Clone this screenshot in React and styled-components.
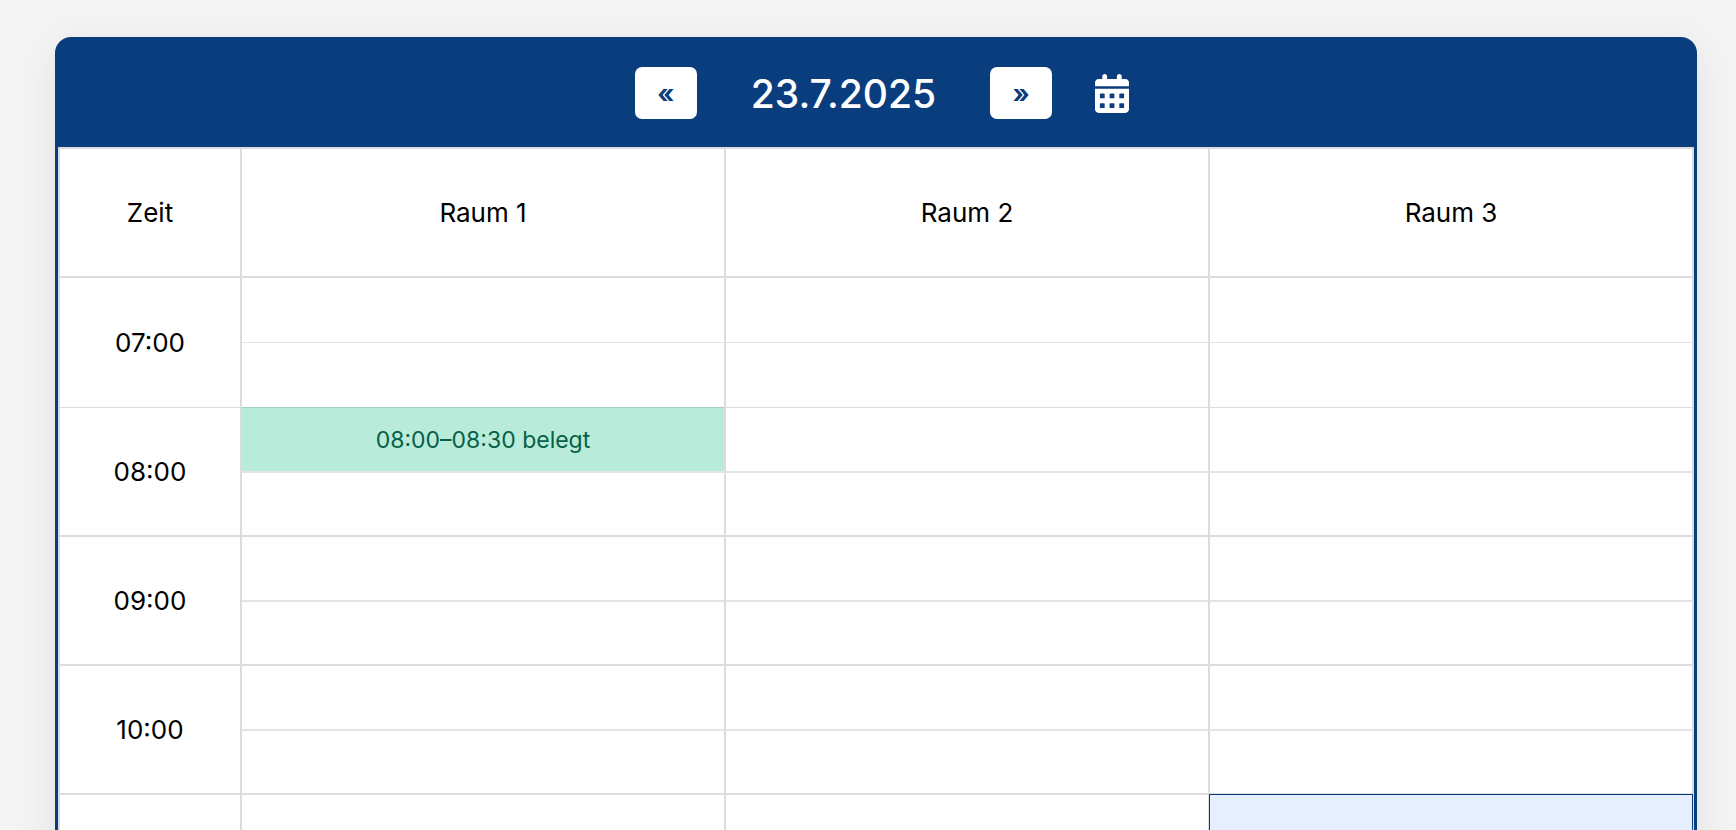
import React from "react";
import styled, { createGlobalStyle } from "styled-components";

const GlobalStyle = createGlobalStyle`
  *, *::before, *::after { box-sizing: border-box; }
  body {
    margin: 0;
    background: #f4f4f4;
    color: #000;
    font-family: Inter, "Liberation Sans", sans-serif;
  }
`;

const Page = styled.main`
  height: 100vh;
  overflow: hidden;
  padding: 37px 39px 0 55px;
`;

const Card = styled.section`
  border: 3px solid #0a3d7e;
  border-radius: 16px;
  background: #0a3d7e;
  box-shadow: 0 8px 40px rgba(0, 0, 0, 0.08);
`;

const Header = styled.header`
  display: flex;
  align-items: center;
  justify-content: center;
  padding: 27px 0 28px 12px;
  color: #fff;
`;

const NavButton = styled.button`
  width: 62px;
  height: 52px;
  padding: 2px 0 0;
  border: 0;
  border-radius: 7px;
  background: #fff;
  color: #0a3d7e;
  font: 700 26px/50px Inter, "Liberation Sans", sans-serif;
  cursor: pointer;
`;

const DateTitle = styled.h1`
  margin: 0 54px;
  padding-top: 2px;
  font-size: 39px;
  font-weight: 500;
  line-height: 50px;
`;

const CalendarButton = styled.button`
  display: flex;
  margin-left: 43px;
  padding: 0;
  border: 0;
  background: none;
  color: #fff;
  cursor: pointer;
`;

const Schedule = styled.table`
  width: 100%;
  table-layout: fixed;
  border-collapse: separate;
  border-spacing: 0;
  border: solid #dcdcdc;
  border-width: 2px 0 0 2px;
  background: #fff;
`;

const TimeColumn = styled.col`
  width: 182px;
`;

const HeadCell = styled.th`
  height: 129px;
  padding: 0;
  border: solid #dcdcdc;
  border-width: 0 2px 2px 0;
  font-size: 26px;
  font-weight: 400;
`;

const TimeCell = styled.th`
  padding: 0;
  border: solid #dcdcdc;
  border-width: 0 2px ${(p) => (p.$thin ? 1 : 2)}px 0;
  font-size: 26px;
  font-weight: 400;
`;

const Slot = styled.td`
  position: relative;
  height: ${(p) => p.$height}px;
  padding: 0;
  border: solid #dcdcdc;
  border-width: 0 2px ${(p) => (p.$thin ? 1 : 2)}px 0;
  border-bottom-color: ${(p) => (p.$hourEnd ? "#dcdcdc" : "#e4e4e4")};
`;

const Booking = styled.div`
  position: absolute;
  inset: -1px 0 0;
  display: flex;
  align-items: center;
  justify-content: center;
  border-top: 1px solid #a3d0c1;
  background: #b8ebda;
  color: #065f46;
  font-size: 23px;
`;

const Selection = styled.div`
  position: absolute;
  inset: -1px;
  border: 1px solid #0a3d7e;
  background: #e6efff;
`;

const rooms = ["Raum 1", "Raum 2", "Raum 3"];
const hours = [
  { time: "07:00", heights: [65, 65], thin: true },
  { time: "08:00", heights: [65, 64], booked: "Raum 1" },
  { time: "09:00", heights: [65, 64] },
  { time: "10:00", heights: [65, 64] },
  { time: "11:00", heights: [65, 64], selected: "Raum 3" },
];

function CalendarIcon() {
  return (
    <svg width="34" height="39" viewBox="0 0 448 512" fill="currentColor" aria-hidden="true">
      <path d="M0 464c0 26.5 21.5 48 48 48h352c26.5 0 48-21.5 48-48V192H0v272zm320-196c0-6.600 5.400-12 12-12h40c6.600 0 12 5.400 12 12v40c0 6.600-5.400 12-12 12h-40c-6.600 0-12-5.400-12-12v-40zm0 128c0-6.600 5.400-12 12-12h40c6.600 0 12 5.400 12 12v40c0 6.600-5.400 12-12 12h-40c-6.600 0-12-5.400-12-12v-40zM192 268c0-6.600 5.400-12 12-12h40c6.600 0 12 5.400 12 12v40c0 6.600-5.400 12-12 12h-40c-6.600 0-12-5.400-12-12v-40zm0 128c0-6.600 5.400-12 12-12h40c6.600 0 12 5.400 12 12v40c0 6.600-5.400 12-12 12h-40c-6.600 0-12-5.400-12-12v-40zM64 268c0-6.600 5.400-12 12-12h40c6.600 0 12 5.400 12 12v40c0 6.600-5.400 12-12 12H76c-6.600 0-12-5.400-12-12v-40zm0 128c0-6.600 5.400-12 12-12h40c6.600 0 12 5.400 12 12v40c0 6.600-5.400 12-12 12H76c-6.600 0-12-5.400-12-12v-40zM400 64h-48V32c0-17.700-14.300-32-32-32s-32 14.300-32 32v32H160V32c0-17.700-14.300-32-32-32S96 14.300 96 32v32H48C21.500 64 0 85.500 0 112v48h448v-48c0-26.500-21.500-48-48-48z" />
    </svg>
  );
}

function HourRows({ hour }) {
  return hour.heights.map((height, half) => (
    <tr key={half}>
      {half === 0 && (
        <TimeCell scope="row" rowSpan={2} $thin={hour.thin}>
          {hour.time}
        </TimeCell>
      )}
      {rooms.map((room) => (
        <Slot key={room} $height={height} $thin={hour.thin} $hourEnd={half === 1}>
          {half === 0 && hour.booked === room && <Booking>08:00–08:30 belegt</Booking>}
          {half === 0 && hour.selected === room && <Selection />}
        </Slot>
      ))}
    </tr>
  ));
}

export default function App() {
  return (
    <Page>
      <GlobalStyle />
      <Card>
        <Header>
          <NavButton aria-label="Vorheriger Tag">«</NavButton>
          <DateTitle>23.7.2025</DateTitle>
          <NavButton aria-label="Nächster Tag">»</NavButton>
          <CalendarButton aria-label="Datum wählen">
            <CalendarIcon />
          </CalendarButton>
        </Header>
        <Schedule>
          <colgroup>
            <TimeColumn />
            <col span={3} />
          </colgroup>
          <thead>
            <tr>
              <HeadCell scope="col">Zeit</HeadCell>
              {rooms.map((room) => (
                <HeadCell key={room} scope="col">{room}</HeadCell>
              ))}
            </tr>
          </thead>
          <tbody>
            {hours.map((hour) => (
              <HourRows key={hour.time} hour={hour} />
            ))}
          </tbody>
        </Schedule>
      </Card>
    </Page>
  );
}
